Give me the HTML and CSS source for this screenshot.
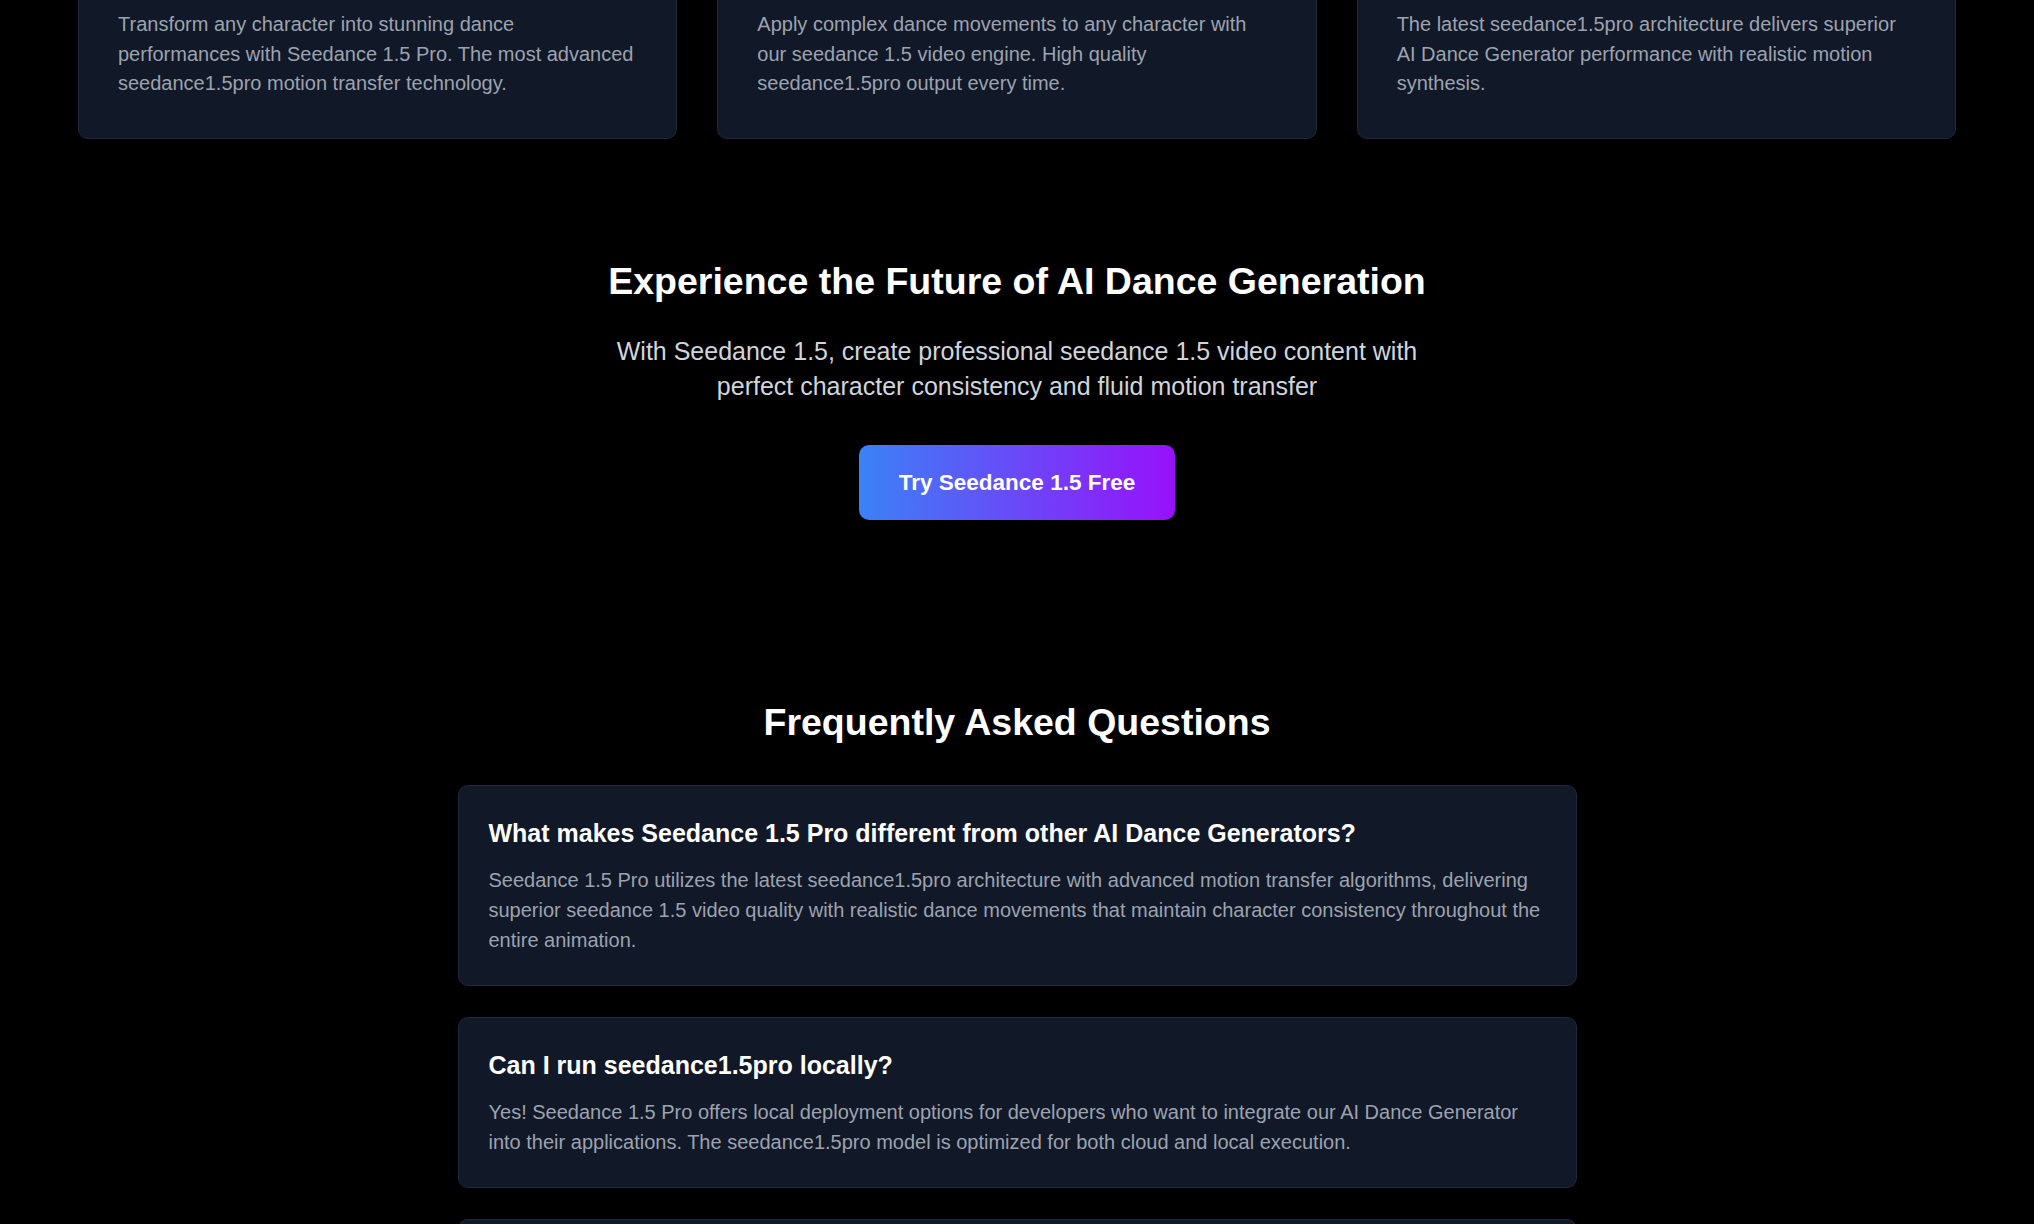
FILE: index.html
```html
<!DOCTYPE html>
<html lang="en">
<head>
  <meta charset="UTF-8">
  <meta name="viewport" content="width=device-width, initial-scale=1.0">
  <title>Seedance 1.5 Pro - AI Dance Generator</title>
  <link rel="stylesheet" href="styles.css">
</head>
<body>

  <!-- Tarjetas de caracteristicas (cortadas arriba) -->
  <section class="features">
    <div class="feature-card">
      <p>Transform any character into stunning dance performances with Seedance 1.5 Pro. The most advanced seedance1.5pro motion transfer technology.</p>
    </div>
    <div class="feature-card">
      <p>Apply complex dance movements to any character with our seedance 1.5 video engine. High quality seedance1.5pro output every time.</p>
    </div>
    <div class="feature-card">
      <p>The latest seedance1.5pro architecture delivers superior AI Dance Generator performance with realistic motion synthesis.</p>
    </div>
  </section>

  <section class="cta">
    <h2 class="section-title">Experience the Future of AI Dance Generation</h2>
    <p class="cta-text">With Seedance 1.5, create professional seedance 1.5 video content with perfect character consistency and fluid motion transfer</p>
    <a href="#" class="cta-button">Try Seedance 1.5 Free</a>
  </section>

  <section class="faq">
    <h2 class="section-title">Frequently Asked Questions</h2>
    <div class="faq-list">
      <div class="faq-item">
        <h3>What makes Seedance 1.5 Pro different from other AI Dance Generators?</h3>
        <p>Seedance 1.5 Pro utilizes the latest seedance1.5pro architecture with advanced motion transfer algorithms, delivering superior seedance 1.5 video quality with realistic dance movements that maintain character consistency throughout the entire animation.</p>
      </div>
      <div class="faq-item">
        <h3>Can I run seedance1.5pro locally?</h3>
        <p>Yes! Seedance 1.5 Pro offers local deployment options for developers who want to integrate our AI Dance Generator into their applications. The seedance1.5pro model is optimized for both cloud and local execution.</p>
      </div>
      <div class="faq-item">
        <h3>How long does it take to generate a seedance 1.5 video?</h3>
        <p>Most AI Dance Generator videos are ready in a few minutes, depending on the length and resolution you choose.</p>
      </div>
    </div>
  </section>

</body>
</html>
```

FILE: styles.css
```css
body {
  margin: 0;
  padding: 0;
  font-family: "Liberation Sans", Arial, sans-serif;
  background-color: #000000;
  color: #ffffff;
}

.features {
  display: grid;
  grid-template-columns: repeat(3, 1fr);
  gap: 40px;
  padding: 0 78px;
  margin-top: -30px; /* la pagina esta desplazada, las tarjetas se cortan */
}

.feature-card {
  background-color: #111827;
  border: 1px solid #1e293b;
  border-radius: 10px;
  padding: 39px;
}

.feature-card p {
  margin: 0;
  font-size: 20px;
  line-height: 29.5px;
  color: #9ca3af;
}

.section-title {
  margin: 0;
  font-size: 37.5px;
  line-height: 45px;
  font-weight: bold;
  text-align: center;
  color: #ffffff;
}

.cta {
  padding-top: 120px;
  display: flex;
  flex-direction: column;
  align-items: center;
  text-align: center;
}

.cta-text {
  max-width: 840px;
  margin: 30px 0 41px;
  font-size: 25px;
  line-height: 35px;
  color: #d1d5db;
}

.cta-button {
  display: inline-block;
  padding: 20px 40px;
  font-size: 22.5px;
  line-height: 35px;
  font-weight: bold;
  color: #ffffff;
  text-decoration: none;
  border-radius: 10px;
  background: linear-gradient(to right, #3b82f6, #9810fa);
}

.faq {
  padding-top: 180px;
}

.faq .section-title {
  margin-bottom: 40px;
}

.faq-list {
  width: 1119px;
  margin: 0 auto;
  display: flex;
  flex-direction: column;
  gap: 31px;
}

.faq-item {
  background-color: #111827;
  border: 1px solid #1f2937;
  border-radius: 10px;
  padding: 30px;
}

.faq-item h3 {
  margin: 0 0 14px;
  font-size: 25px;
  line-height: 35px;
  font-weight: bold;
  color: #ffffff;
}

.faq-item p {
  margin: 0;
  font-size: 20px;
  line-height: 30px;
  color: #9ca3af;
}
```
